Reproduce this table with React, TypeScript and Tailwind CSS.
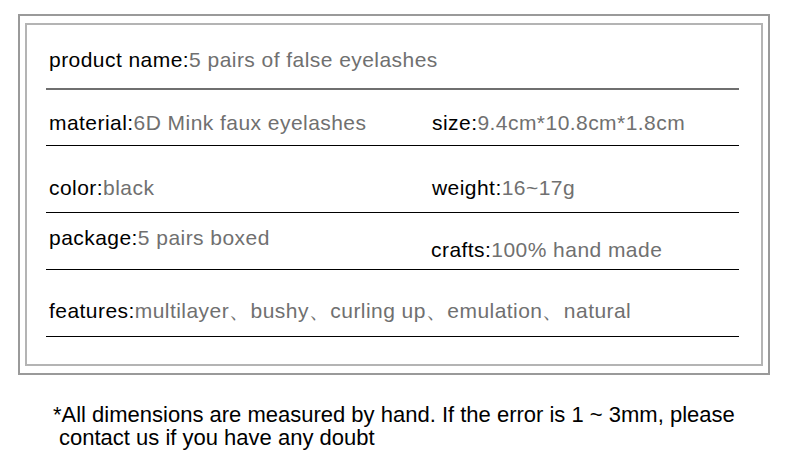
import React from "react";

function Cell({ label, value, pt }: { label: string; value: string; pt: string }) {
  return (
    <div className={`text-[21px] leading-[24px] tracking-[0.45px] whitespace-nowrap ${pt}`}>
      <span className="text-black">{label}</span>
      <span className="text-[#707070]">{value}</span>
    </div>
  );
}

export default function App() {
  return (
    <div className="w-[790px] h-[460px] bg-white overflow-hidden font-['Liberation_Sans',Arial,sans-serif]">
      <div className="pt-[14px] pl-[18px]">
        <div className="w-[752px] h-[361px] border-2 border-[#9a9a9a] pt-[7px] pl-[5px]">
          <div className="w-[738px] h-[343px] border-2 border-[#b4b4b4] pl-[19px]">
            <div className="w-[693px]">
              <div className="h-[65px] border-b-2 border-[#6f6f6f] pl-[3px] flex">
                <Cell label="product name:" value="5 pairs of false eyelashes" pt="pt-[23px]" />
              </div>
              <div className="h-[56px] border-b border-black pl-[3px] flex">
                <div className="w-[383px]">
                  <Cell label="material:" value="6D Mink faux eyelashes" pt="pt-[21px]" />
                </div>
                <Cell label="size:" value="9.4cm*10.8cm*1.8cm" pt="pt-[21px]" />
              </div>
              <div className="h-[67px] border-b border-black pl-[3px] flex">
                <div className="w-[383px]">
                  <Cell label="color:" value="black" pt="pt-[30px]" />
                </div>
                <Cell label="weight:" value="16~17g" pt="pt-[30px]" />
              </div>
              <div className="h-[57px] border-b border-black pl-[3px] flex">
                <div className="w-[382px]">
                  <Cell label="package:" value="5 pairs boxed" pt="pt-[13px]" />
                </div>
                <Cell label="crafts:" value="100% hand made" pt="pt-[25px]" />
              </div>
              <div className="h-[67px] border-b border-black pl-[3px] flex">
                <Cell label="features:" value="multilayer、bushy、curling up、emulation、natural" pt="pt-[29px]" />
              </div>
            </div>
          </div>
        </div>
      </div>
      <div className="pt-[28px] pl-[53px] text-[22px] leading-[23px] text-black whitespace-nowrap">
        <div>*All dimensions are measured by hand. If the error is 1 ~ 3mm, please</div>
        <div className="pl-[6px]">contact us if you have any doubt</div>
      </div>
    </div>
  );
}
